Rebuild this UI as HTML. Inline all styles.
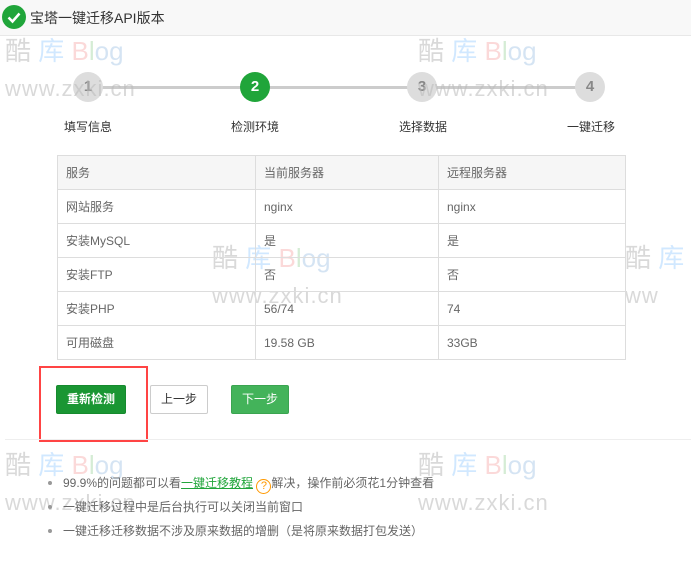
<!DOCTYPE html>
<html><head><meta charset="utf-8"><style>
*{margin:0;padding:0;box-sizing:border-box}
body{width:691px;height:563px;background:#fff;font-family:"Liberation Sans","Noto Sans CJK SC",sans-serif;font-size:12px;color:#555;position:relative;overflow:hidden}
.hd{position:absolute;left:0;top:0;width:691px;height:36px;background:#f8f8f8;border-bottom:1px solid #e8e8e8}
.hd .ic{position:absolute;left:2px;top:5px;width:24px;height:24px;border-radius:50%;background:#20a53a}
.hd .t{position:absolute;left:30px;top:8px;font-size:14px;color:#333}
.line{position:absolute;left:88px;top:86px;width:502px;height:3px;background:#ccc}
.c{position:absolute;top:72px;width:30px;height:30px;border-radius:50%;background:#ddd;color:#888;font-weight:bold;font-size:15px;text-align:center;line-height:30px}
.lb{position:absolute;top:118px;font-size:12px;color:#333}
table{position:absolute;left:57px;top:155px;width:569px;border-collapse:collapse}
td{border:1px solid #ddd;height:34px;padding-left:8px;color:#666;font-size:12px}
tr:first-child td{background:#f6f6f6}
.b{position:absolute;top:385px;height:29px;border-radius:2px;font-size:12px;text-align:center;line-height:27px}
.wm{position:absolute;font-size:26px;opacity:.22;white-space:nowrap;line-height:1}
.wm b{font-weight:normal}
.ws{position:absolute;font-size:22px;color:#bbb;opacity:.55;letter-spacing:1px}
li{position:absolute;left:63px;list-style:none;font-size:12px;color:#666}
li:before{content:"";position:absolute;left:-15px;top:7px;width:4px;height:4px;border-radius:50%;background:#999}
</style></head><body>
<div class="hd"><div class="ic"><svg width="24" height="24"><path d="M6.5 12.5l4 4 7-8" stroke="#fff" stroke-width="2.5" fill="none"/></svg></div><div class="t">宝塔一键迁移API版本</div></div>

<div class="wm" style="left:5px;top:38px"><b style="color:#555">酷</b> <b style="color:#39f">库</b> <b style="color:#e55">B</b><b style="color:#4a4">l</b><b style="color:#48c">og</b></div>
<div class="wm" style="left:418px;top:38px"><b style="color:#555">酷</b> <b style="color:#39f">库</b> <b style="color:#e55">B</b><b style="color:#4a4">l</b><b style="color:#48c">og</b></div>
<div class="wm" style="left:212px;top:245px"><b style="color:#555">酷</b> <b style="color:#39f">库</b> <b style="color:#e55">B</b><b style="color:#4a4">l</b><b style="color:#48c">og</b></div>
<div class="wm" style="left:625px;top:245px"><b style="color:#555">酷</b> <b style="color:#39f">库</b></div>
<div class="wm" style="left:5px;top:452px"><b style="color:#555">酷</b> <b style="color:#39f">库</b> <b style="color:#e55">B</b><b style="color:#4a4">l</b><b style="color:#48c">og</b></div>
<div class="wm" style="left:418px;top:452px"><b style="color:#555">酷</b> <b style="color:#39f">库</b> <b style="color:#e55">B</b><b style="color:#4a4">l</b><b style="color:#48c">og</b></div>

<div class="line"></div>
<div class="c" style="left:73px">1</div>
<div class="c" style="left:240px;background:#20a53a;color:#fff">2</div>
<div class="c" style="left:407px">3</div>
<div class="c" style="left:575px">4</div>
<div class="ws" style="left:5px;top:76px">www.zxki.cn</div>
<div class="ws" style="left:418px;top:76px">www.zxki.cn</div>
<div class="ws" style="left:212px;top:283px">www.zxki.cn</div>
<div class="ws" style="left:625px;top:283px">ww</div>
<div class="ws" style="left:5px;top:490px">www.zxki.cn</div>
<div class="ws" style="left:418px;top:490px">www.zxki.cn</div>
<div class="lb" style="left:64px">填写信息</div>
<div class="lb" style="left:231px">检测环境</div>
<div class="lb" style="left:399px">选择数据</div>
<div class="lb" style="left:567px">一键迁移</div>

<table>
<tr><td style="width:198px">服务</td><td style="width:183px">当前服务器</td><td>远程服务器</td></tr>
<tr><td>网站服务</td><td>nginx</td><td>nginx</td></tr>
<tr><td>安装MySQL</td><td>是</td><td>是</td></tr>
<tr><td>安装FTP</td><td>否</td><td>否</td></tr>
<tr><td>安装PHP</td><td>56/74</td><td>74</td></tr>
<tr><td>可用磁盘</td><td>19.58 GB</td><td>33GB</td></tr>
</table>

<div class="b" style="left:56px;width:70px;background:#1a9633;color:#fff;font-weight:bold;border:1px solid #168a2e">重新检测</div>
<div class="b" style="left:150px;width:58px;border:1px solid #ccc;color:#333">上一步</div>
<div class="b" style="left:231px;width:58px;background:#43b35a;color:#fff;border:1px solid #3aa450">下一步</div>
<div style="position:absolute;left:39px;top:366px;width:109px;height:76px;border:2px solid #f44"></div>
<div style="position:absolute;left:5px;top:439px;width:686px;height:1px;background:#eee"></div>

<ul>
<li style="top:474px">99.9%的问题都可以看<span style="color:#20a53a;text-decoration:underline">一键迁移教程</span> <span style="display:inline-block;width:15px;height:15px;border:1.5px solid #f90;border-radius:50%;color:#f90;font-size:11px;text-align:center;line-height:12px;vertical-align:-2px">?</span>解决，操作前必须花1分钟查看</li>
<li style="top:498px">一键迁移过程中是后台执行可以关闭当前窗口</li>
<li style="top:522px">一键迁移迁移数据不涉及原来数据的增删（是将原来数据打包发送）</li>
</ul>
</body></html>
